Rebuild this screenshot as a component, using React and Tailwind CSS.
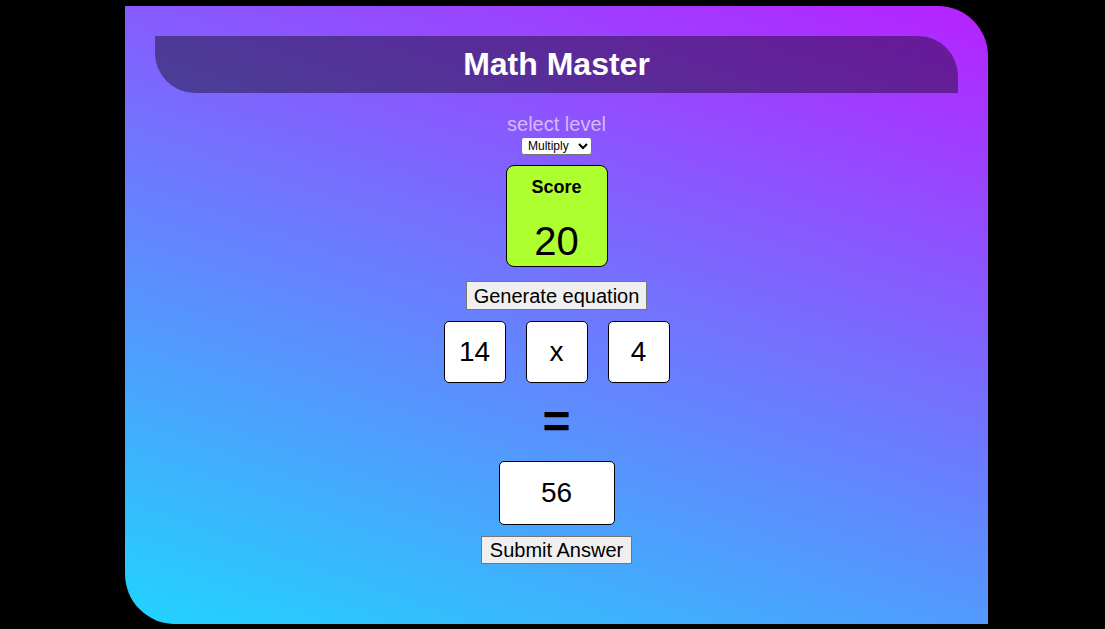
import React from 'react';

const App = () => {
  return (
    <div className="min-h-screen w-full bg-black pt-[6px] pl-[125px]" style={{ fontFamily: '"Liberation Sans", Arial, sans-serif' }}>
      <div className="flex h-[618px] w-[863px] flex-col items-center rounded-tr-[50px] rounded-bl-[50px] bg-[linear-gradient(19deg,#21d4fd_0%,#b721ff_100%)] px-[30px] pt-[30px]">
        <div className="flex h-[57px] w-full items-center justify-center rounded-tr-[40px] rounded-bl-[40px] bg-black/40 pb-[1px]">
          <h1 className="text-[32px] font-bold text-white">Math Master</h1>
        </div>

        <p className="mt-[20px] text-[20px] leading-[23px] text-[#d9b8fb]">select level</p>
        <select className="mt-[1px] h-[18px] rounded-[3px] border border-[#767676] bg-white px-[2px] text-[12px] leading-none text-black" defaultValue="multiply">
          <option value="add">Add</option>
          <option value="subtract">Subtract</option>
          <option value="multiply">Multiply</option>
        </select>

        <div className="mt-[10px] flex h-[102px] w-[102px] flex-col items-center rounded-[8px] border border-black bg-[#adff2f]">
          <p className="mt-[11px] text-[18px] font-bold leading-[21px] text-black">Score</p>
          <p className="mt-[20px] text-[40px] leading-[46px] text-black">20</p>
        </div>

        <button className="mt-[14px] h-[29px] border border-[#767676] bg-[#efefef] px-[7px] text-[20px] leading-none text-black">
          Generate equation
        </button>

        <div className="mt-[11px] flex gap-[20px]">
          <div className="flex h-[62px] w-[62px] items-center justify-center rounded-[5px] border border-black bg-white text-[28px] text-black">14</div>
          <div className="flex h-[62px] w-[62px] items-center justify-center rounded-[5px] border border-black bg-white text-[28px] text-black">x</div>
          <div className="flex h-[62px] w-[62px] items-center justify-center rounded-[5px] border border-black bg-white text-[28px] text-black">4</div>
        </div>

        <p className="mt-[11px] text-[48px] font-bold leading-[56px] text-black">=</p>

        <div className="mt-[11px] flex h-[64px] w-[116px] items-center justify-center rounded-[5px] border border-black bg-white text-[28px] text-black">56</div>

        <button className="mt-[11px] h-[28px] border border-[#767676] bg-[#efefef] px-[8px] text-[20px] leading-none text-black">
          Submit Answer
        </button>
      </div>
    </div>
  );
};

export default App;
